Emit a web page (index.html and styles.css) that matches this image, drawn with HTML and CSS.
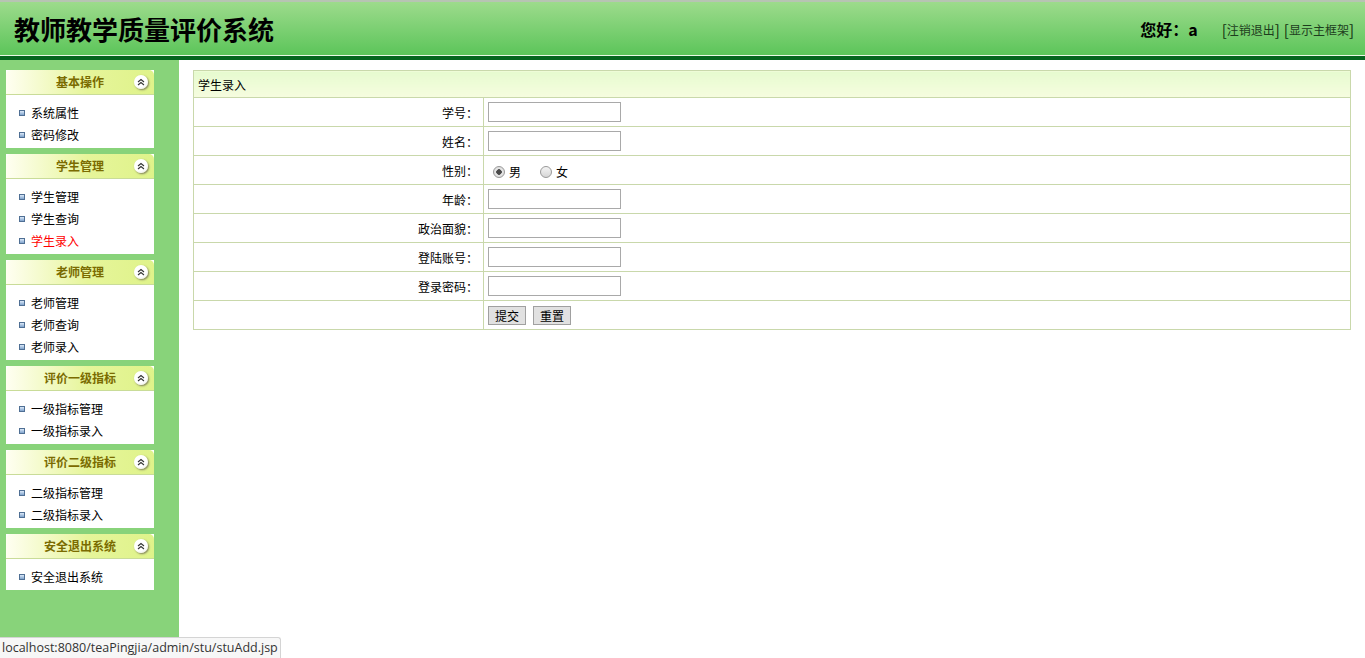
FILE: index.html
```html
<!DOCTYPE html>
<html>
	<head>
		<title>教师教学质量评价系统</title><meta charset="utf-8">
		<link rel="stylesheet" href="styles.css">
	</head>
	<body>
		<div id="cabecera">
			<div class="titulo">教师教学质量评价系统</div>
			<div class="usuario">
				<span class="hola">您好：a</span>
				<span class="enlace">[<a href="#">注销退出</a>]</span>
				<span class="enlace">[<a href="#">显示主框架</a>]</span>
			</div>
		</div>
		<div id="barra"></div>
		<div id="principal">
			<div id="menu">
				<div class="panel">
					<div class="panelTitulo">基本操作<span class="plegar"><svg width="8" height="8" viewBox="0 0 8 8"><path d="M1 4 L4 1.5 L7 4 M1 7 L4 4.5 L7 7" fill="none" stroke="#333" stroke-width="1.1"/></svg></span></div>
					<ul class="panelCuerpo">
						<li><a href="#">系统属性</a></li>
						<li><a href="#">密码修改</a></li>
					</ul>
				</div>
				<div class="panel">
					<div class="panelTitulo">学生管理<span class="plegar"><svg width="8" height="8" viewBox="0 0 8 8"><path d="M1 4 L4 1.5 L7 4 M1 7 L4 4.5 L7 7" fill="none" stroke="#333" stroke-width="1.1"/></svg></span></div>
					<ul class="panelCuerpo">
						<li><a href="#">学生管理</a></li>
						<li><a href="#">学生查询</a></li>
						<li><a href="#" class="activo">学生录入</a></li>
					</ul>
				</div>
				<div class="panel">
					<div class="panelTitulo">老师管理<span class="plegar"><svg width="8" height="8" viewBox="0 0 8 8"><path d="M1 4 L4 1.5 L7 4 M1 7 L4 4.5 L7 7" fill="none" stroke="#333" stroke-width="1.1"/></svg></span></div>
					<ul class="panelCuerpo">
						<li><a href="#">老师管理</a></li>
						<li><a href="#">老师查询</a></li>
						<li><a href="#">老师录入</a></li>
					</ul>
				</div>
				<div class="panel">
					<div class="panelTitulo">评价一级指标<span class="plegar"><svg width="8" height="8" viewBox="0 0 8 8"><path d="M1 4 L4 1.5 L7 4 M1 7 L4 4.5 L7 7" fill="none" stroke="#333" stroke-width="1.1"/></svg></span></div>
					<ul class="panelCuerpo">
						<li><a href="#">一级指标管理</a></li>
						<li><a href="#">一级指标录入</a></li>
					</ul>
				</div>
				<div class="panel">
					<div class="panelTitulo">评价二级指标<span class="plegar"><svg width="8" height="8" viewBox="0 0 8 8"><path d="M1 4 L4 1.5 L7 4 M1 7 L4 4.5 L7 7" fill="none" stroke="#333" stroke-width="1.1"/></svg></span></div>
					<ul class="panelCuerpo">
						<li><a href="#">二级指标管理</a></li>
						<li><a href="#">二级指标录入</a></li>
					</ul>
				</div>
				<div class="panel">
					<div class="panelTitulo">安全退出系统<span class="plegar"><svg width="8" height="8" viewBox="0 0 8 8"><path d="M1 4 L4 1.5 L7 4 M1 7 L4 4.5 L7 7" fill="none" stroke="#333" stroke-width="1.1"/></svg></span></div>
					<ul class="panelCuerpo">
						<li><a href="#">安全退出系统</a></li>
					</ul>
				</div>
			</div>
			<div id="contenido">
				<form action="" method="post">
					<table class="formulario">
						<tr><th colspan="2">学生录入</th></tr>
						<tr><td class="etiqueta">学号：</td><td><input type="text" class="caja"></td></tr>
						<tr><td class="etiqueta">姓名：</td><td><input type="text" class="caja"></td></tr>
						<tr><td class="etiqueta">性别：</td><td><label class="radio"><input type="radio" name="sexo" checked>男</label><label class="radio"><input type="radio" name="sexo">女</label></td></tr>
						<tr><td class="etiqueta">年龄：</td><td><input type="text" class="caja"></td></tr>
						<tr><td class="etiqueta">政治面貌：</td><td><input type="text" class="caja"></td></tr>
						<tr><td class="etiqueta">登陆账号：</td><td><input type="text" class="caja"></td></tr>
						<tr><td class="etiqueta">登录密码：</td><td><input type="password" class="caja"></td></tr>
						<tr><td class="etiqueta"></td><td><input type="submit" value="提交" class="boton"><input type="reset" value="重置" class="boton"></td></tr>
					</table>
				</form>
			</div>
		</div>
		<div id="estado">localhost:8080/teaPingjia/admin/stu/stuAdd.jsp</div>
	</body>
</html>
```

FILE: styles.css
```css
html, body { height: 100%; }
body { margin: 0; font-family: "Noto Sans CJK SC", "Liberation Sans", sans-serif; font-size: 12px; color: #000; overflow: hidden; }
a { text-decoration: none; color: inherit; }

#cabecera { height: 53px; border-top: 2px solid #b7c4b3; border-bottom: 1px solid #e8f8e4; background: linear-gradient(#9ddb8c, #5cc55a); display: flex; align-items: center; justify-content: space-between; padding: 0 11px 0 14px; }
.titulo { font-size: 26px; font-weight: bold; line-height: 30px; margin-top: 1px; }
.usuario { display: flex; align-items: center; margin-top: 1px; }
.hola { font-size: 16px; font-weight: bold; margin-right: 20px; }
.enlace { font-size: 15px; color: #0f2f0f; margin-left: 4px; }
.enlace a { font-size: 12px; color: #1d3d1d; vertical-align: 1px; }
#barra { height: 4px; background-color: #05651f; }

#principal { display: flex; height: calc(100% - 60px); }
#menu { flex: none; width: 179px; background-color: #88d37a; padding: 10px 0 0 6px; box-sizing: border-box; }
.panel { width: 148px; margin-bottom: 6px; background-color: #fff; }
.panelTitulo { position: relative; height: 24px; line-height: 24px; text-align: center; font-weight: bold; color: #7a6b00; background: linear-gradient(to right, #fffff2, #e6f59a 55%, #dff38a); border-radius: 5px 5px 0 0; border-bottom: 1px solid #c9dc98; }
.plegar { position: absolute; right: 6px; top: 5px; width: 14px; height: 14px; border-radius: 50%; background: radial-gradient(circle at 40% 35%, #fff 55%, #dcdcdc); box-shadow: 1px 1px 2px #7a7a5a; display: flex; align-items: center; justify-content: center; }
.panelCuerpo { list-style: none; margin: 0; padding: 7px 0 2px 0; }
.panelCuerpo li { height: 22px; line-height: 22px; padding-left: 25px; position: relative; }
.panelCuerpo li:before { content: ""; position: absolute; left: 13px; top: 8px; width: 4px; height: 4px; border: 1px solid #4f6f94; background: linear-gradient(#dbe9f8, #7fa3cc); }
.panelCuerpo a.activo { color: #f00; }

#contenido { flex: 1; padding: 10px 14px 0 14px; }
.formulario { width: 100%; border-collapse: collapse; border: 1px solid #c9d8ab; }
.formulario th { height: 26px; text-align: left; font-weight: normal; padding: 0 4px; background: linear-gradient(#e6fbcf, #f6fcdf); border: 1px solid #c9d8ab; }
.formulario td { height: 28px; border: 1px solid #c9d8ab; padding: 0 0 0 4px; }
.formulario td.etiqueta { width: 284px; text-align: right; padding: 0 5px 0 0; }
.caja { width: 133px; height: 20px; box-sizing: border-box; border: 1px solid #a9a9a9; margin: 0; padding: 0 2px; vertical-align: middle; }
.radio { margin-right: 14px; vertical-align: middle; }
.radio input { appearance: none; -webkit-appearance: none; margin: 0 4px 0 5px; width: 12px; height: 12px; border-radius: 50%; border: 1px solid #9a9a9a; background: linear-gradient(#f4f4f4, #d6d6d6); vertical-align: -1px; box-sizing: border-box; }
.radio input:checked { background: radial-gradient(circle, #4a4a4a 2.5px, #e8e8e8 3px, #d2d2d2); }
.boton { height: 19px; padding: 0 6px; margin: 0 7px 0 0; font-family: "Noto Sans CJK SC", sans-serif; font-size: 12px; color: #000; background-color: #e1e1e1; border: 1px solid #a0a0a0; vertical-align: middle; line-height: 15px; }

#estado { position: fixed; left: 0; bottom: 0; height: 20px; line-height: 20px; padding: 0 2px; font-family: "Open Sans", "Liberation Sans", sans-serif; font-size: 12.5px; color: #333; background-color: #f7f7f7; border-top: 1px solid #d4d4d4; border-right: 1px solid #d4d4d4; border-radius: 0 3px 0 0; }
```
